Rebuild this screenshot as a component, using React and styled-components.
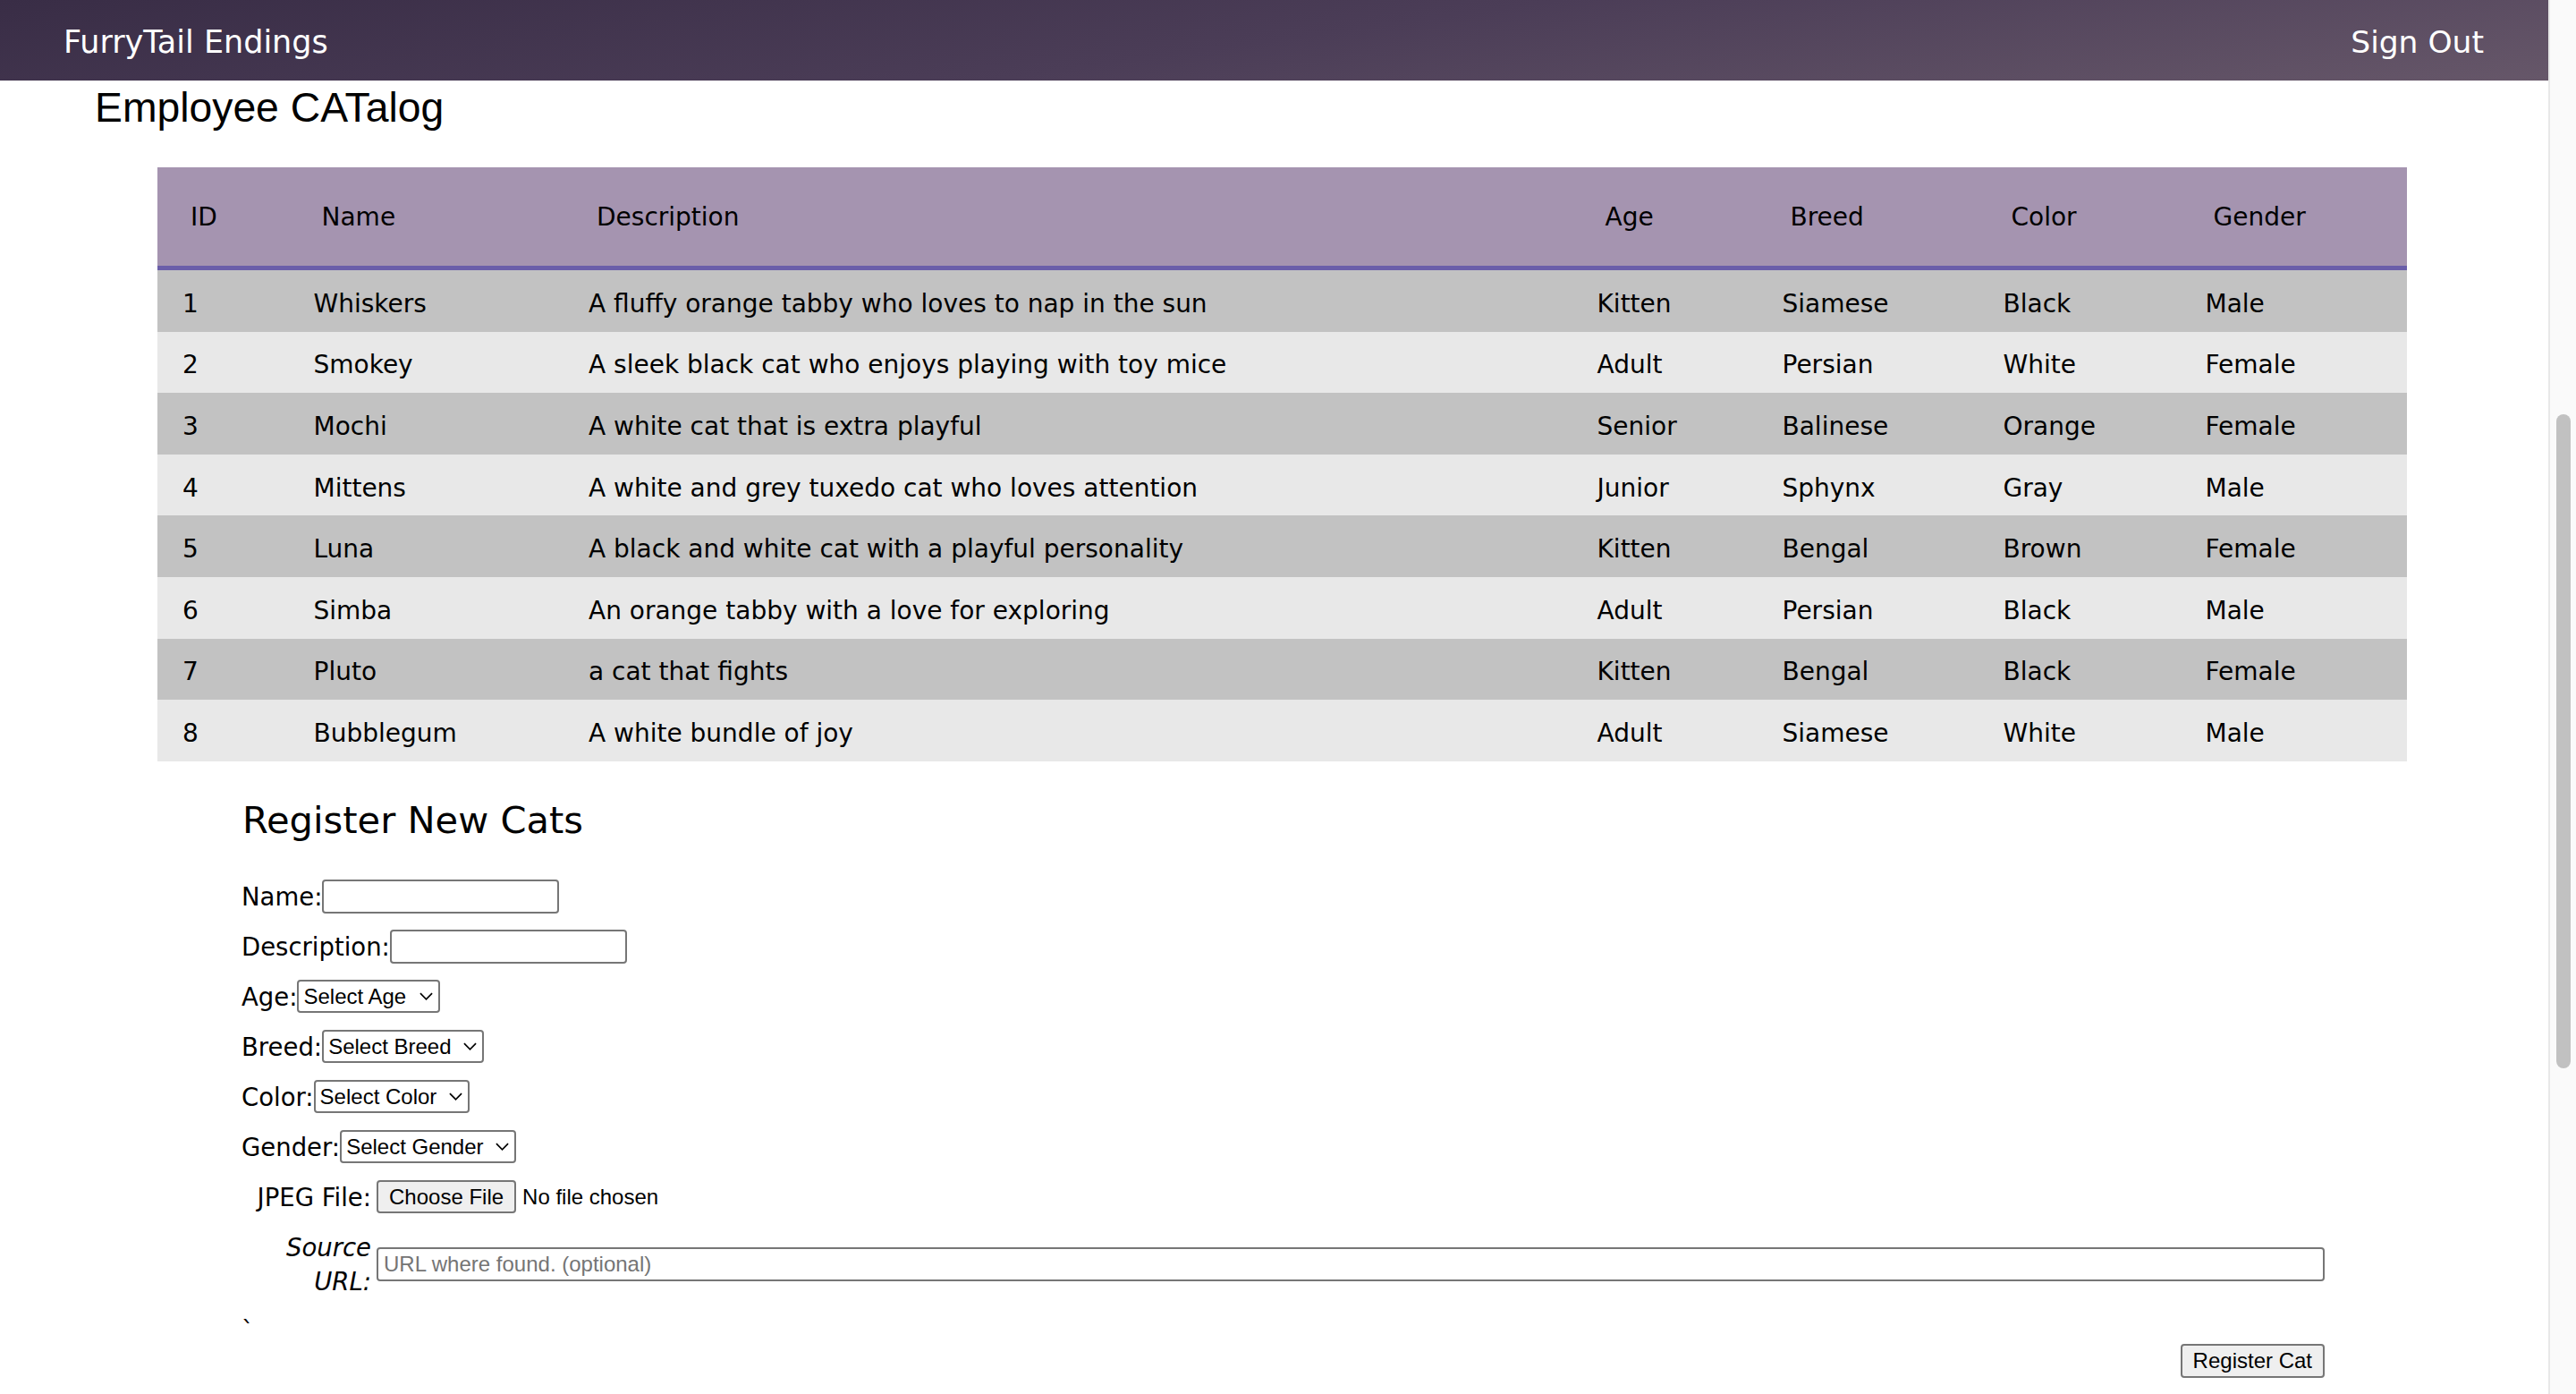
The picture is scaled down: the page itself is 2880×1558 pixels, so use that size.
import styled, { createGlobalStyle, css } from "styled-components";

const GlobalStyle = createGlobalStyle`
  html, body {
    margin: 0;
    padding: 0;
    background: #ffffff;
  }
  body {
    font-family: "DejaVu Sans", "Noto Sans", sans-serif;
    color: #000;
    overflow: hidden;
  }
  * {
    box-sizing: border-box;
  }
`;

const cats = [
  { id: 1, name: "Whiskers", description: "A fluffy orange tabby who loves to nap in the sun", age: "Kitten", breed: "Siamese", color: "Black", gender: "Male" },
  { id: 2, name: "Smokey", description: "A sleek black cat who enjoys playing with toy mice", age: "Adult", breed: "Persian", color: "White", gender: "Female" },
  { id: 3, name: "Mochi", description: "A white cat that is extra playful", age: "Senior", breed: "Balinese", color: "Orange", gender: "Female" },
  { id: 4, name: "Mittens", description: "A white and grey tuxedo cat who loves attention", age: "Junior", breed: "Sphynx", color: "Gray", gender: "Male" },
  { id: 5, name: "Luna", description: "A black and white cat with a playful personality", age: "Kitten", breed: "Bengal", color: "Brown", gender: "Female" },
  { id: 6, name: "Simba", description: "An orange tabby with a love for exploring", age: "Adult", breed: "Persian", color: "Black", gender: "Male" },
  { id: 7, name: "Pluto", description: "a cat that fights", age: "Kitten", breed: "Bengal", color: "Black", gender: "Female" },
  { id: 8, name: "Bubblegum", description: "A white bundle of joy", age: "Adult", breed: "Siamese", color: "White", gender: "Male" },
];

const columns = [
  { key: "id", title: "ID", width: 146.5 },
  { key: "name", title: "Name", width: 307.5 },
  { key: "description", title: "Description", width: 1127.5 },
  { key: "age", title: "Age", width: 207 },
  { key: "breed", title: "Breed", width: 247 },
  { key: "color", title: "Color", width: 226 },
  { key: "gender", title: "Gender", width: 253.5 },
];

const selects = [
  { label: "Age:", placeholder: "Select Age", options: ["Kitten", "Junior", "Adult", "Senior"] },
  { label: "Breed:", placeholder: "Select Breed", options: ["Siamese", "Persian", "Balinese", "Sphynx", "Bengal"] },
  { label: "Color:", placeholder: "Select Color", options: ["Black", "White", "Orange", "Gray", "Brown"] },
  { label: "Gender:", placeholder: "Select Gender", options: ["Male", "Female"] },
];

const Chevron = () => (
  <ChevronIcon viewBox="0 0 16 9" width="15" height="9">
    <path d="M1 1 L8 8 L15 1" fill="none" stroke="#000" strokeWidth="1.8" />
  </ChevronIcon>
);

const App = () => {
  return (
    <>
      <GlobalStyle />
      <Page>
        <Main>
          <TopBar>
            <Brand>FurryTail Endings</Brand>
            <SignOut>Sign Out</SignOut>
          </TopBar>

          <Title>Employee CATalog</Title>

          <CatTable>
            <colgroup>
              {columns.map((c) => (
                <col key={c.key} style={{ width: c.width }} />
              ))}
            </colgroup>
            <thead>
              <tr>
                {columns.map((c) => (
                  <HeadCell key={c.key}>{c.title}</HeadCell>
                ))}
              </tr>
            </thead>
            <tbody>
              {cats.map((cat, index) => (
                <Row key={cat.id} odd={index % 2 === 0}>
                  {columns.map((c) => (
                    <Cell key={c.key}>{cat[c.key]}</Cell>
                  ))}
                </Row>
              ))}
            </tbody>
          </CatTable>

          <FormSection>
            <FormTitle>Register New Cats</FormTitle>
            <Form onSubmit={(e) => e.preventDefault()}>
              <Field>
                <Label>Name:</Label>
                <TextInput type="text" />
              </Field>
              <Field>
                <Label>Description:</Label>
                <TextInput type="text" />
              </Field>
              {selects.map((s) => (
                <Field key={s.label}>
                  <Label>{s.label}</Label>
                  <SelectWrap>
                    <Select defaultValue="">
                      <option value="">{s.placeholder}</option>
                      {s.options.map((o) => (
                        <option key={o} value={o}>
                          {o}
                        </option>
                      ))}
                    </Select>
                    <Chevron />
                  </SelectWrap>
                </Field>
              ))}
              <GridField>
                <SideLabel>JPEG File:</SideLabel>
                <FileInput type="file" accept="image/jpeg" />
              </GridField>
              <GridField>
                <SideLabel italic>Source URL:</SideLabel>
                <UrlInput type="text" placeholder="URL where found. (optional)" />
              </GridField>
              <Footer>
                <Tick>`</Tick>
                <Actions>
                  <Button type="submit">Register Cat</Button>
                </Actions>
              </Footer>
            </Form>
          </FormSection>
        </Main>
        <ScrollTrack>
          <ScrollThumb />
        </ScrollTrack>
      </Page>
    </>
  );
};

const Page = styled.div`
  display: flex;
  width: 100vw;
  height: 100vh;
  overflow: hidden;
`;

const Main = styled.main`
  flex: 1;
  min-width: 0;
`;

const TopBar = styled.header`
  height: 90px;
  display: flex;
  align-items: center;
  justify-content: space-between;
  padding: 3px 72px 0 71px;
  background: linear-gradient(172deg, #392d46 0%, #4b3d57 50%, #665769 100%);
  color: #ffffff;
  font-size: 35px;
`;

const Brand = styled.div`
  line-height: 40px;
`;

const SignOut = styled.div`
  line-height: 40px;
  font-size: 34.5px;
  cursor: pointer;
`;

const Title = styled.h1`
  margin: 4px 0 0;
  padding-left: 106px;
  font-family: "Liberation Sans", Arial, sans-serif;
  font-weight: normal;
  font-size: 46.3px;
  line-height: 52px;
`;

const CatTable = styled.table`
  margin: 41px 0 0 176px;
  width: 2515px;
  table-layout: fixed;
  border-collapse: separate;
  border-spacing: 0;
  font-size: 28px;
`;

const HeadCell = styled.th`
  height: 115px;
  padding: 0 0 0 37px;
  text-align: left;
  font-weight: normal;
  vertical-align: middle;
  background: #a594b0;
  border-bottom: 5px solid #6a5ea9;
  white-space: nowrap;
`;

const Row = styled.tr`
  background: ${({ odd }) => (odd ? "#c2c2c2" : "#e8e8e8")};
`;

const Cell = styled.td`
  height: 68.6px;
  padding: 7px 0 0 28px;
  vertical-align: middle;
  white-space: nowrap;
  line-height: 34px;
`;

const FormSection = styled.section`
  margin-top: 42px;
  padding-left: 270px;
  width: 2599px;
`;

const FormTitle = styled.h2`
  margin: 0 0 0 1px;
  font-weight: normal;
  font-size: 41.6px;
  line-height: 48px;
`;

const Form = styled.form`
  margin-top: 42px;
  display: flex;
  flex-direction: column;
  gap: 18px;
  font-size: 27.5px;
`;

const Field = styled.div`
  display: flex;
  align-items: center;
  height: 38px;
`;

const Label = styled.label`
  line-height: 38px;
  white-space: nowrap;
`;

const control = css`
  font-family: "Liberation Sans", Arial, sans-serif;
  font-size: 24px;
  color: #000;
  border: 2px solid #767676;
  border-radius: 4px;
`;

const TextInput = styled.input`
  ${control};
  width: 265px;
  height: 38px;
  padding: 0 4px;
  background: #fff;
`;

const SelectWrap = styled.div`
  position: relative;
  display: inline-flex;
`;

const Select = styled.select`
  ${control};
  appearance: none;
  -webkit-appearance: none;
  height: 37px;
  padding: 0 34px 0 5px;
  background: #fff;
  outline: none;
`;

const ChevronIcon = styled.svg`
  position: absolute;
  right: 8px;
  top: 14px;
  pointer-events: none;
`;

const GridField = styled.div`
  display: grid;
  grid-template-columns: 145px 1fr;
  column-gap: 6px;
  align-items: center;
`;

const SideLabel = styled.label`
  text-align: right;
  line-height: 38px;
  white-space: ${({ italic }) => (italic ? "normal" : "nowrap")};
  font-style: ${({ italic }) => (italic ? "italic" : "normal")};
`;

const FileInput = styled.input`
  font-family: "Liberation Sans", Arial, sans-serif;
  font-size: 24px;
  color: #000;
  height: 37px;

  &::file-selector-button {
    ${control};
    height: 37px;
    padding: 0 12px;
    margin-right: 7px;
    background: #efefef;
  }
`;

const UrlInput = styled.input`
  ${control};
  width: 100%;
  height: 38px;
  padding: 0 6px;
  background: #fff;

  &::placeholder {
    color: #757575;
  }
`;

const Footer = styled.div`
  margin-top: 4px;
`;

const Tick = styled.div`
  line-height: 29px;
  height: 29px;
`;

const Actions = styled.div`
  display: flex;
  justify-content: flex-end;
`;

const Button = styled.button`
  ${control};
  height: 38px;
  padding: 0 12px;
  background: #efefef;
  cursor: pointer;
`;

const ScrollTrack = styled.div`
  width: 31px;
  flex-shrink: 0;
  padding: 463px 6px 0 7px;
  background: #fafafa;
  border-left: 2px solid #e8e8e8;
`;

const ScrollThumb = styled.div`
  width: 16px;
  height: 731px;
  border-radius: 8px;
  background: #c1c1c1;
`;

export default App;
